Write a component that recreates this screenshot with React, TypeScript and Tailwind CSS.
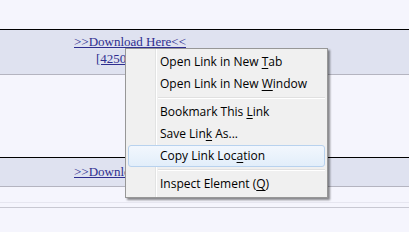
import React from 'react';

const Acc = ({ children }: { children: React.ReactNode }) => (
  <span className="underline underline-offset-2">{children}</span>
);

const Item = ({ children, active = false }: { children: React.ReactNode; active?: boolean }) => (
  <div
    className={
      active
        ? 'mx-[2px] h-[22px] flex items-center pl-[31px] rounded-[3px] border border-[#b8d2ee] bg-gradient-to-b from-[#f2f7fd] to-[#e2eefa]'
        : 'mx-[2px] h-[22px] flex items-center pl-[31px] border border-transparent'
    }
  >
    <span className="whitespace-pre">{children}</span>
  </div>
);

const Sep = () => (
  <div className="h-[6px] flex items-center pl-[32px] pr-[2px]">
    <div className="w-full border-t border-[#e0e0e0] border-b border-b-white" />
  </div>
);

export default function App() {
  return (
    <div className="relative w-[409px] h-[232px] overflow-hidden bg-[#f5f5fd] font-['Liberation_Serif',serif]">
      <div className="h-[29px]" />
      <div className="h-[46px] border-t border-black border-b border-b-[#b4b4c0] bg-[#dfe2f0] pl-[74px] pt-[3px] text-[13px] leading-[17px] text-[#2e2e8f]">
        <div className="underline">&gt;&gt;Download Here&lt;&lt;</div>
        <div className="pl-[22px] underline">[4250 KB]</div>
      </div>
      <div className="h-[82px]" />
      <div className="h-[30px] border-t border-black border-b border-b-[#b4b4c0] bg-[#dfe2f0] pl-[74px] pt-[5px] text-[13px] leading-[17px] text-[#2e2e8f]">
        <span className="underline">&gt;&gt;Download Here&lt;&lt;</span>
      </div>
      <div className="h-[16px] border-b border-[#e6e6f0]" />
      <div className="h-[5px] border-b border-[#c8c8d2]" />

      <div className="absolute left-[125px] top-[48px] w-[203px] bg-[#f0f0f0] border border-[#979797] shadow-[2px_2px_2px_rgba(0,0,0,0.45)] py-[2px] text-[12px] text-black font-['Open_Sans','Noto_Sans',sans-serif]">
        <div className="absolute left-[29px] top-0 bottom-0 border-l border-[#e2e3e3] border-r border-r-white" />
        <div className="relative">
          <Item>Open Link in New <Acc>T</Acc>ab</Item>
          <Item>Open Link in New <Acc>W</Acc>indow</Item>
          <Sep />
          <Item>Bookmark This <Acc>L</Acc>ink</Item>
          <Item>Save Lin<Acc>k</Acc> As...</Item>
          <Item active>Copy Link Loc<Acc>a</Acc>tion</Item>
          <Sep />
          <Item>Inspect Element (<Acc>Q</Acc>)</Item>
        </div>
      </div>
    </div>
  );
}
